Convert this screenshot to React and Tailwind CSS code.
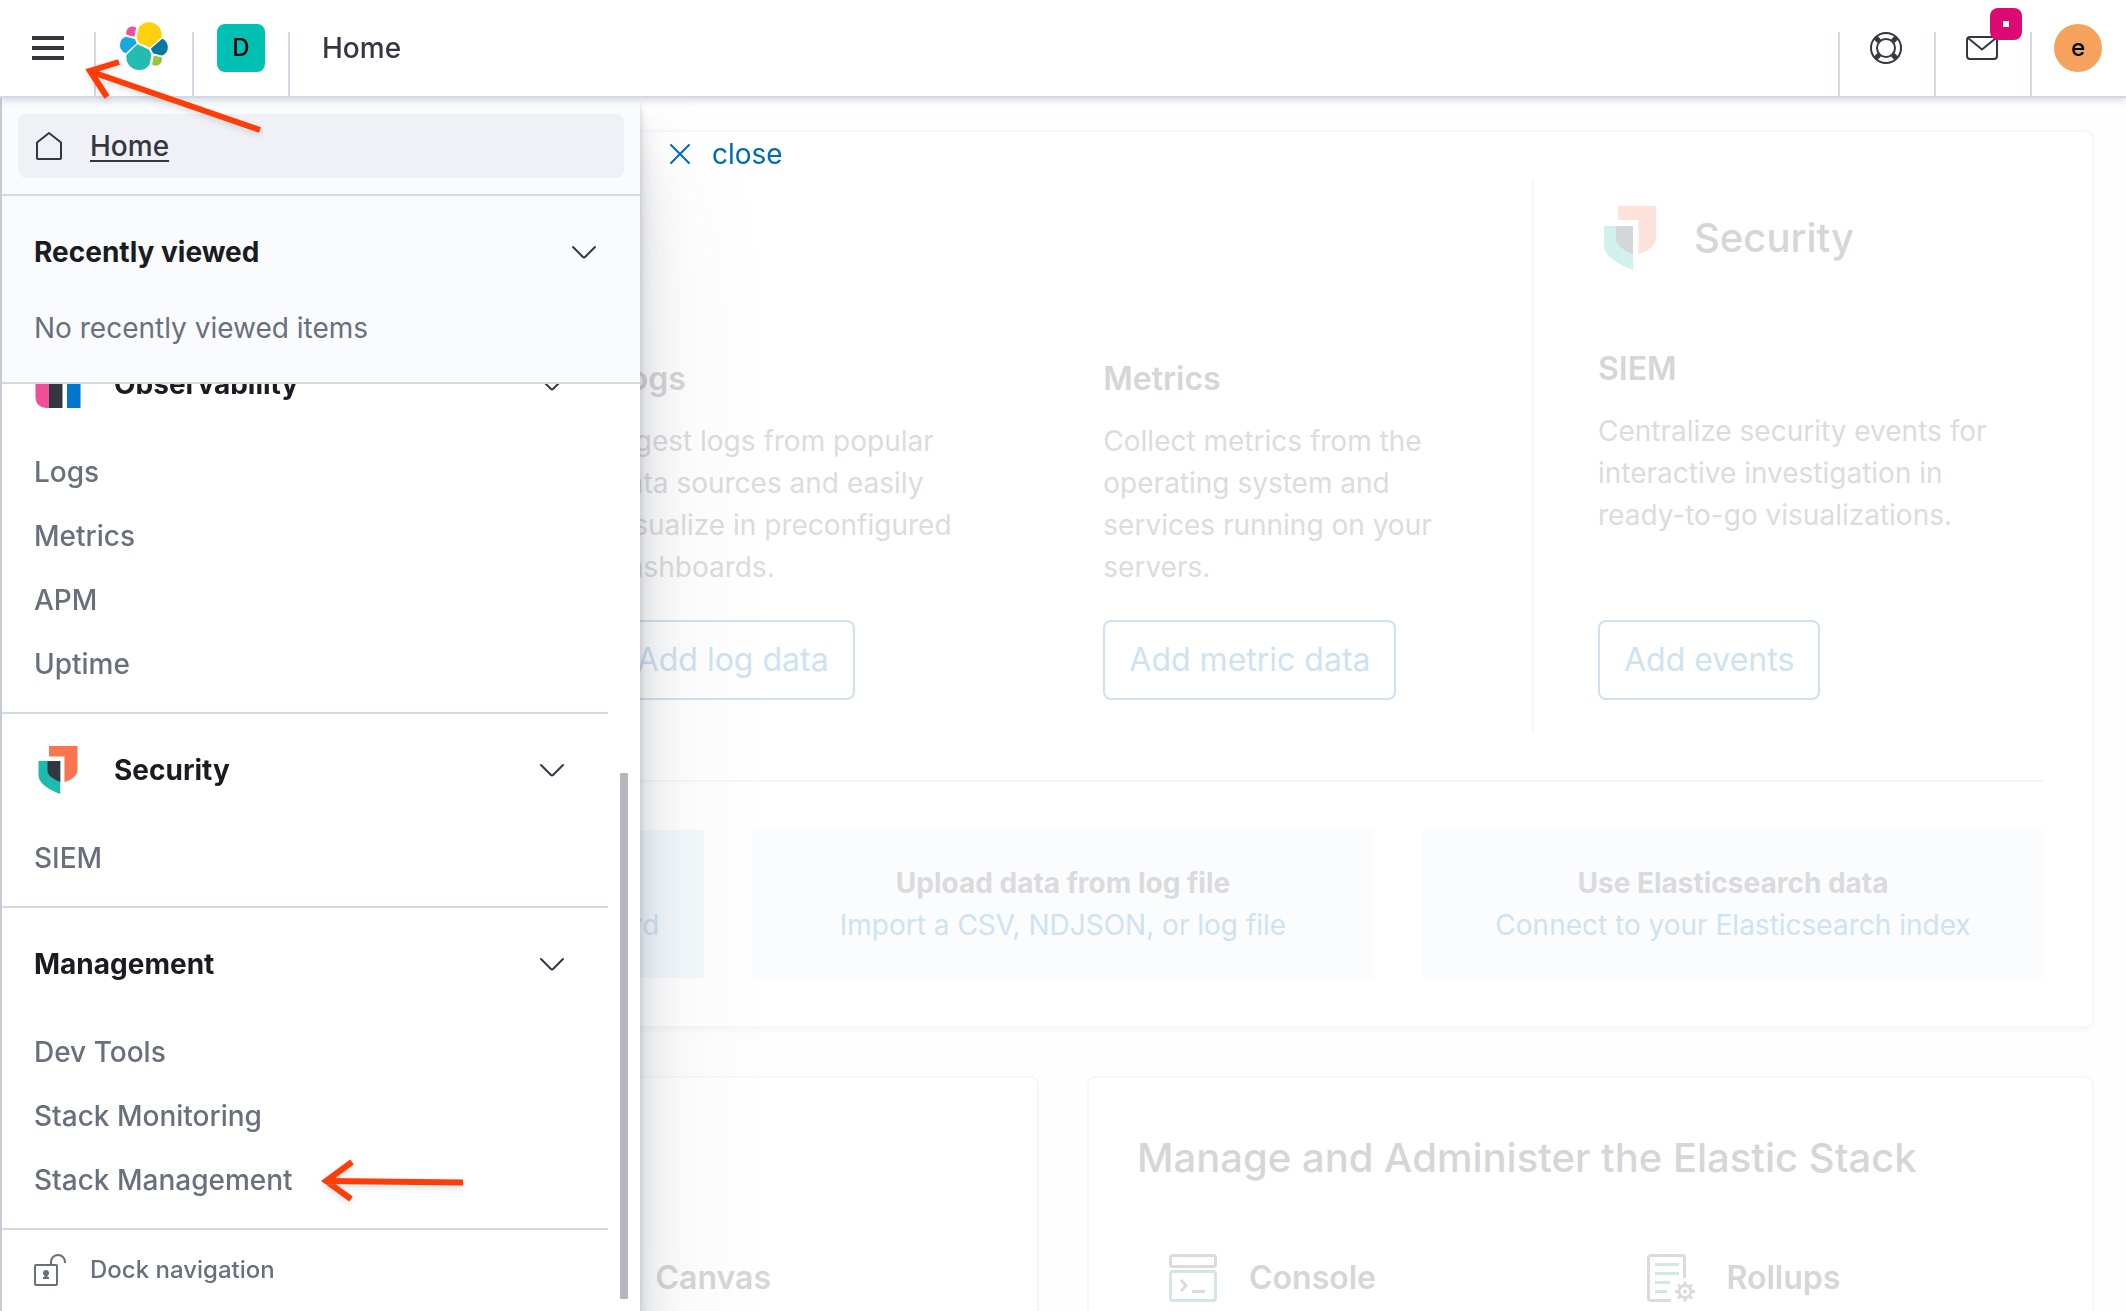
import React from "react";

const ElasticLogo = () => (
  <svg className="size-12" viewBox="1.3 1.3 29.3 29.3" aria-hidden="true">
    <path fill="#FED10A" d="M12.58 13.787l7.002 3.211 7.066-6.213a7.849 7.849 0 0 0 .152-1.557c0-4.287-3.464-7.775-7.722-7.775a7.704 7.704 0 0 0-6.368 3.365l-1.176 6.13 1.046 2.839z" />
    <path fill="#24BBB1" d="M5.333 21.228A7.964 7.964 0 0 0 5.18 22.8c0 4.299 3.474 7.797 7.745 7.797a7.71 7.71 0 0 0 6.4-3.4l1.166-6.106-1.556-2.991-7.03-3.219-6.573 6.347z" />
    <path fill="#EF5098" d="M5.29 9.106l4.799 1.138 1.05-5.484a3.783 3.783 0 0 0-2.29-.769 3.814 3.814 0 0 0-3.79 3.83c0 .454.08.885.23 1.285z" />
    <path fill="#17A8E0" d="M4.873 10.255a5.345 5.345 0 0 0-3.57 5.062c0 2.27 1.4 4.298 3.504 5.103l6.73-6.1-1.235-2.653-5.43-1.412z" />
    <path fill="#93C83E" d="M20.873 27.202a3.789 3.789 0 0 0 2.277.768 3.814 3.814 0 0 0 3.79-3.83 3.79 3.79 0 0 0-.23-1.29l-4.795-1.125-1.042 5.477z" />
    <path fill="#0779A1" d="M21.65 20.5l5.28 1.242a5.345 5.345 0 0 0 3.57-5.062c0-2.27-1.4-4.298-3.512-5.103l-6.9 6.07 1.561 2.853z" />
  </svg>
);

const MenuIcon = () => (
  <svg className="size-8" viewBox="0 0 32 32" fill="#343741" aria-hidden="true">
    <path d="M0 4h32v4H0zM0 14h32v4H0zM0 24h32v4H0z" />
  </svg>
);

const HelpIcon = () => (
  <svg className="size-8" viewBox="0 0 32 32" fill="none" stroke="#343741" strokeWidth="2" aria-hidden="true">
    <circle cx="16" cy="16" r="15" />
    <circle cx="16" cy="16" r="9" />
    <path strokeWidth="5" d="M5.8 5.8l3.4 3.4M26.2 5.8l-3.4 3.4M5.8 26.2l3.4-3.4M26.2 26.2l-3.4-3.4" />
  </svg>
);

const MailIcon = () => (
  <svg className="size-8" viewBox="0 0 32 32" fill="none" stroke="#343741" strokeWidth="2" aria-hidden="true">
    <rect x="1" y="5" width="30" height="22" rx="3" />
    <path d="M2 6l14 11.500L30 6" strokeLinejoin="round" />
  </svg>
);

const HomeIcon = () => (
  <svg className="size-8" viewBox="0 0 32 32" fill="none" stroke="#343741" strokeWidth="2" strokeLinejoin="round" aria-hidden="true">
    <path d="M3 12.500L15 3l12 9.500V28a1 1 0 0 1-1 1H4a1 1 0 0 1-1-1z" />
  </svg>
);

const ChevronDown = () => (
  <svg className="size-8" viewBox="0 0 32 32" fill="none" stroke="#343741" strokeWidth="2" strokeLinecap="round" strokeLinejoin="round" aria-hidden="true">
    <path d="M5 11l10.200 10.200a1 1 0 0 0 1.600 0L27 11" />
  </svg>
);

const CloseIcon = () => (
  <svg className="size-6" viewBox="0 0 24 24" stroke="#006BB4" strokeWidth="2" strokeLinecap="round" aria-hidden="true">
    <path d="M3 3l18 18M21 3L3 21" />
  </svg>
);

const UnlockIcon = () => (
  <svg className="size-8" viewBox="0 0 32 32" fill="none" stroke="#69707D" strokeWidth="2" aria-hidden="true">
    <rect x="1" y="11" width="22" height="20" rx="1" />
    <path d="M17 11V8a7 7 0 0 1 14 0v1" />
    <circle cx="12" cy="19" r="3" fill="#69707D" stroke="none" />
    <path fill="#69707D" stroke="none" d="M10.500 20h3v3h1.500v2H9v-2h1.500z" />
  </svg>
);

const ObservabilityLogo = () => (
  <svg className="size-12" viewBox="0 0 32 32" aria-hidden="true">
    <path fill="#F04E98" d="M1 0h9v32H8a7 7 0 0 1-7-7z" />
    <path fill="#343741" d="M10 10h9v22h-9z" />
    <path fill="#0077CC" d="M22 0h2a7 7 0 0 1 7 7v25h-9z" />
  </svg>
);

const SecurityLogo = ({ className }) => (
  <svg className={className} viewBox="0 0 32 32" aria-hidden="true">
    <path fill="#FA744E" d="M10 0h19v15.500c0 3.700-2.600 6.700-8.700 8.500V7H10z" />
    <path fill="#1DBAB0" d="M3 10h14.500v22C8.500 28.500 3 24.500 3 19.500z" />
    <path fill="#343741" d="M9 10h8.500v14C12 22 9 19 9 16.500z" />
  </svg>
);

const ConsoleIcon = () => (
  <svg className="size-12" viewBox="0 0 48 48" fill="none" stroke="#DADBDC" strokeWidth="3" aria-hidden="true">
    <rect x="1.500" y="1.500" width="45" height="11" rx="2" />
    <rect x="1.500" y="17.500" width="45" height="29" rx="2" stroke="#D2E8E5" />
    <path d="M12 26l5 5.500-5 5.500M23 37.500h13" />
  </svg>
);

const RollupsIcon = () => (
  <svg className="size-12" viewBox="0 0 48 48" fill="none" stroke="#DADBDC" strokeWidth="3" aria-hidden="true">
    <path d="M24 46.500H4a2.500 2.500 0 0 1-2.500-2.500V4A2.500 2.500 0 0 1 4 1.500h31A2.500 2.500 0 0 1 37.500 4v20" />
    <path stroke="#D2E8E5" d="M8 10.500h24M8 19.500h24M8 28.500h15M8 37.500h12" />
    <circle cx="38" cy="37.500" r="6" />
    <circle cx="38" cy="37.500" r="1" strokeWidth="2" />
    <path d="M38 27.500v4M38 43.500v4M28 37.500h4M44 37.500h4M31 30.500l2.700 2.700M42.300 41.800l2.700 2.700M45 30.500l-2.700 2.700M33.700 41.800L31 44.500" />
  </svg>
);

const sections = [
  {
    title: "Observability",
    logo: <ObservabilityLogo />,
    links: ["Logs", "Metrics", "APM", "Uptime"],
  },
  {
    title: "Security",
    logo: <SecurityLogo className="size-12" />,
    links: ["SIEM"],
  },
  {
    title: "Management",
    links: ["Dev Tools", "Stack Monitoring", "Stack Management"],
  },
];

const observabilityCards = [
  {
    title: "Logs",
    text: "Ingest logs from popular data sources and easily visualize in preconfigured dashboards.",
    button: "Add log data",
  },
  {
    title: "Metrics",
    text: "Collect metrics from the operating system and services running on your servers.",
    button: "Add metric data",
  },
];

const dataTiles = [
  { title: "Add sample data", link: "Load a data set and a Kibana dashboard", active: true },
  { title: "Upload data from log file", link: "Import a CSV, NDJSON, or log file" },
  { title: "Use Elasticsearch data", link: "Connect to your Elasticsearch index" },
];

const AddButton = ({ children }) => (
  <button
    type="button"
    className="h-20 self-start rounded-lg border-2 border-[#CFE2F0] px-6 text-[32px] text-[#CFE2F0]"
  >
    {children}
  </button>
);

const Header = () => (
  <header className="relative z-20 flex h-[98px] items-end border-b-2 border-[#D3DAE6] bg-white shadow-[0_4px_6px_-1px_rgba(152,162,179,0.35)]">
    <button type="button" aria-label="Toggle primary navigation" className="flex h-24 w-[94px] items-center pl-8">
      <MenuIcon />
    </button>
    <a href="#home" aria-label="Elastic home" className="flex h-16 w-[98px] border-l-2 border-[#D3DAE6] pl-6">
      <span className="-mt-2.5">
        <ElasticLogo />
      </span>
    </a>
    <button type="button" aria-label="Spaces menu" className="flex h-16 w-[98px] justify-center border-x-2 border-[#D3DAE6]">
      <span className="-mt-2 flex size-12 items-center justify-center rounded-lg bg-[#00BFB3] text-2xl font-medium text-black">
        D
      </span>
    </button>
    <span className="flex h-24 items-center pl-8 text-[28px] font-medium text-[#343741]">Home</span>

    <div className="ml-auto flex">
      <button type="button" aria-label="Help menu" className="flex h-16 w-24 border-l-2 border-[#D3DAE6] pl-[30px]">
        <HelpIcon />
      </button>
      <button type="button" aria-label="News feed" className="relative flex h-16 w-24 border-l-2 border-[#D3DAE6] pl-[30px]">
        <MailIcon />
        <span className="absolute -top-6 right-2 flex size-8 items-center justify-center rounded-lg bg-[#DD0A73]">
          <span className="size-1.5 bg-white" />
        </span>
      </button>
      <button type="button" aria-label="Account menu" className="flex h-16 w-24 border-l-2 border-[#D3DAE6] pl-[22px]">
        <span className="-mt-2 flex size-12 items-center justify-center rounded-full bg-[#F5A35C] text-2xl font-medium text-black">
          e
        </span>
      </button>
    </div>
  </header>
);

const NavSection = ({ title, logo, links }) => (
  <section className="border-b-2 border-[#D3DAE6] pb-4">
    <button type="button" className="flex h-28 w-full items-center pr-10 pl-8 text-[28px] font-bold text-[#1A1C21]">
      {logo && <span className="mr-8">{logo}</span>}
      {title}
      <span className="ml-auto">
        <ChevronDown />
      </span>
    </button>
    <ul>
      {links.map((link) => (
        <li key={link} className="flex h-16 items-center gap-7 pl-8">
          <a href={`#${link}`} className="text-[28px] font-medium text-[#69707D]">
            {link}
          </a>
          {link === "Stack Management" && (
            <svg className="h-12 w-36 drop-shadow-md" viewBox="0 0 144 48" fill="none" stroke="#FF3B06" strokeWidth="6" aria-hidden="true">
              <path d="M4 25l138 1.500M31 6L5 25l25 18" />
            </svg>
          )}
        </li>
      ))}
    </ul>
  </section>
);

const SideNav = () => (
  <nav className="fixed top-[98px] bottom-0 left-0 z-10 flex w-[640px] flex-col border-l-2 border-[#C5CAD4] bg-white shadow-[0_80px_128px_rgba(65,78,101,0.1),0_48px_64px_rgba(65,78,101,0.1),0_32px_32px_rgba(65,78,101,0.1),0_16px_16px_rgba(65,78,101,0.1),0_8px_8px_rgba(65,78,101,0.1),0_4px_4px_rgba(65,78,101,0.1)]">
    <div className="relative bg-[#FAFBFD]">
      <div className="border-b-2 border-[#D3DAE6] p-4">
        <a href="#home" className="flex h-16 items-center gap-6 rounded-lg bg-[#F0F1F7] pl-4 text-[28px] font-medium text-[#343741] underline underline-offset-4">
          <HomeIcon />
          Home
        </a>
      </div>
      <div className="border-b-2 border-[#D3DAE6] pb-[34px]">
        <button type="button" className="flex h-28 w-full items-center pr-10 pl-8 text-[28px] font-bold text-[#1A1C21]">
          Recently viewed
          <span className="ml-auto">
            <ChevronDown />
          </span>
        </button>
        <p className="pl-8 text-[28px] leading-[40px] text-[#69707D]">No recently viewed items</p>
      </div>
    </div>

    {/* sections list, scrolled to its end */}
    <div className="relative flex min-h-0 flex-1 flex-col justify-end overflow-hidden pr-8">
      {sections.map((section) => (
        <NavSection key={section.title} {...section} />
      ))}
      <button type="button" className="mb-px flex h-20 shrink-0 items-center gap-6 pl-8 text-2xl font-medium text-[#69707D]">
        <UnlockIcon />
        Dock navigation
      </button>
      <div className="absolute right-3 bottom-3 h-[526px] w-2 bg-[#B5B9BF]" />
    </div>

    <button type="button" className="absolute top-8 left-[666px] flex h-12 items-center gap-5 text-[28px] text-[#006BB4]">
      <CloseIcon />
      close
    </button>
  </nav>
);

const SolutionsPanel = () => (
  <section className="rounded-lg border-2 border-[#F6F7F9] bg-white p-12 shadow-[0_4px_4px_rgba(152,162,179,0.05)]">
    <div className="flex">
      <div className="flex h-[552px] flex-1 flex-col pb-8 pl-9">
        <div className="mt-auto grid grid-cols-3 gap-16">
          {observabilityCards.map((card) => (
            <div key={card.title} className="flex h-[342px] flex-col pr-16 first:col-start-2">
              <h3 className="text-[32px] leading-[42px] font-semibold text-[#D6D6D7]">{card.title}</h3>
              <p className="mt-5 text-[28px] leading-[42px] text-[#DBDCDD]">{card.text}</p>
              <div className="mt-auto flex">
                <AddButton>{card.button}</AddButton>
              </div>
            </div>
          ))}
        </div>
      </div>
      <div className="flex w-[512px] flex-col border-l-2 border-[#F6F7F9] pt-[26px] pb-8 pl-16">
        <h2 className="flex h-16 items-center gap-8 text-[40px] font-medium text-[#D6D6D7]">
          <SecurityLogo className="size-16 opacity-20" />
          Security
        </h2>
        <h3 className="mt-[78px] text-[32px] leading-[42px] font-semibold text-[#D6D6D7]">SIEM</h3>
        <p className="mt-5 pr-11 text-[28px] leading-[42px] text-[#DBDCDD]">
          Centralize security events for interactive investigation in ready-to-go visualizations.
        </p>
        <div className="mt-auto flex">
          <AddButton>Add events</AddButton>
        </div>
      </div>
    </div>
    <hr className="my-12 border-t-2 border-[#F6F7F9]" />
    <div className="grid grid-cols-3 gap-12">
      {dataTiles.map((tile) => (
        <div
          key={tile.title}
          className={`p-8 text-center text-[28px] leading-[42px] ${tile.active ? "bg-[#F4F9FC]" : "bg-[#FAFCFE]"}`}
        >
          <p className="font-bold text-[#DADBDC]">{tile.title}</p>
          <a href="#data" className="text-[#CFE2F0]">
            {tile.link}
          </a>
        </div>
      ))}
    </div>
  </section>
);

const FeatureTitle = ({ icon, children }) => (
  <div className="flex items-center gap-8 only:col-start-2">
    <span className="size-12">{icon}</span>
    <h3 className="text-[32px] leading-[40px] font-semibold text-[#D6D6D7]">{children}</h3>
  </div>
);

const App = () => {
  return (
    <div className="flex h-screen flex-col overflow-hidden bg-[#FEFEFE] font-[Inter,sans-serif]">
      <Header />
      <SideNav />

      <main className="flex flex-col gap-12 p-8">
        <SolutionsPanel />
        <div className="grid grid-cols-2 gap-12">
          <section className="rounded-lg border-2 border-[#F6F7F9] bg-white p-12">
            <div className="grid grid-cols-2 gap-12 pt-32 pb-32 pl-8">
              <FeatureTitle>Canvas</FeatureTitle>
            </div>
          </section>
          <section className="rounded-lg border-2 border-[#F6F7F9] bg-white p-12">
            <h2 className="text-[40px] leading-[64px] font-medium text-[#D6D6D7]">
              Manage and Administer the Elastic Stack
            </h2>
            <div className="grid grid-cols-2 gap-20 pt-16 pb-32 pl-8">
              <FeatureTitle icon={<ConsoleIcon />}>Console</FeatureTitle>
              <FeatureTitle icon={<RollupsIcon />}>Rollups</FeatureTitle>
            </div>
          </section>
        </div>
      </main>

      <svg
        className="pointer-events-none absolute top-14 left-20 z-30 h-24 w-48 drop-shadow-md"
        viewBox="0 0 192 96"
        fill="none"
        stroke="#FF3B06"
        strokeWidth="6"
        aria-hidden="true"
      >
        <path d="M9 15l171 59M39 6L10 15l17 26" />
      </svg>
    </div>
  );
};

export default App;
